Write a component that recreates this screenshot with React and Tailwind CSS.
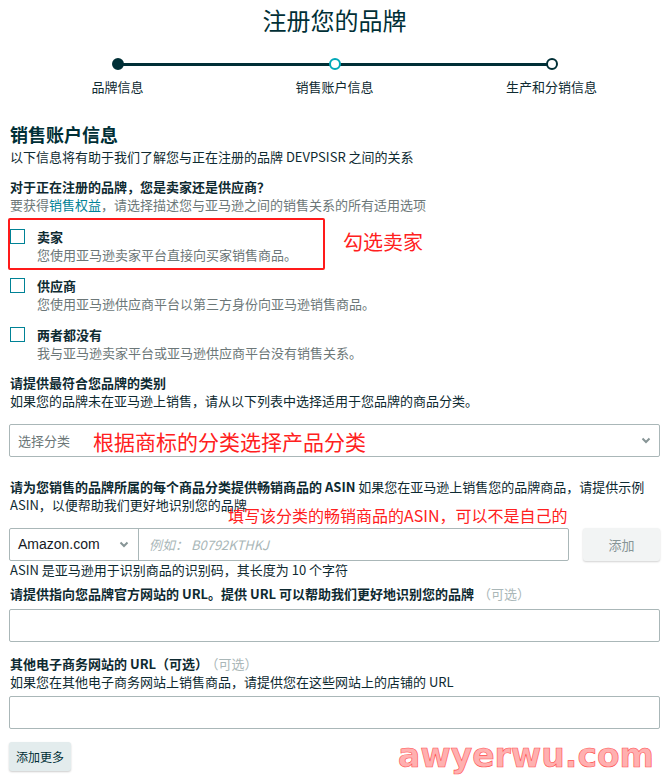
import { useState } from 'react';

const FONT = 'font-["Noto_Sans_CJK_SC","Liberation_Sans",sans-serif]';

function Chevron({ className = '' }) {
  return (
    <svg width="10" height="7" viewBox="0 0 10 7" className={className}>
      <polyline points="1.5,1.5 5,5 8.5,1.5" fill="none" stroke="#879596" strokeWidth="2" />
    </svg>
  );
}

function Stepper() {
  const steps = [
    { label: '品牌信息', dot: 'bg-[#002f36] border-[#002f36]' },
    { label: '销售账户信息', dot: 'bg-white border-[#00a8b8]' },
    { label: '生产和分销信息', dot: 'bg-white border-[#002f36]' },
  ];
  return (
    <div className="relative mt-[24px] grid grid-cols-3">
      {/* connector */}
      <div className="absolute left-[108px] right-[108px] top-[5px] h-[3px] bg-[#002f36]" />
      {steps.map(s => (
        <div key={s.label} className="flex flex-col items-center">
          <div className={`relative w-[12px] h-[12px] rounded-full border-2 ${s.dot}`} />
          <div className="mt-[8px] text-[13px] leading-[18px] text-[#0e2a31]">{s.label}</div>
        </div>
      ))}
    </div>
  );
}

function Option({ title, desc, checked, onToggle, children }) {
  return (
    <div className="relative flex items-start">
      <button onClick={onToggle}
        className={`mt-[1px] ml-[1px] w-[15px] h-[15px] border border-[#008296] shrink-0 ${checked ? 'bg-[#008296]' : 'bg-white'}`} />
      <div className="ml-[12px]">
        <div className="text-[13px] leading-[18px] font-bold text-[#0e2a31]">{title}</div>
        <div className="text-[13px] leading-[18px] text-[#6c7778]">{desc}</div>
      </div>
      {children}
    </div>
  );
}

export default function App() {
  const [checks, setChecks] = useState([false, false, false]);
  const toggle = i => setChecks(c => c.map((v, j) => (j === i ? !v : v)));

  return (
    <div className={`${FONT} w-[669px] bg-white px-[9px] pb-[7px] text-[#0e2a31]`}>
      {/* Title */}
      <h1 className="pt-[6px] text-center text-[24px] leading-[28px] text-[#002f36]">注册您的品牌</h1>

      <Stepper />

      {/* Section */}
      <div className="pl-[1px]">
        <h2 className="mt-[26px] text-[18px] leading-[24px] font-bold text-[#002f36]">销售账户信息</h2>
        <p className="mt-[2px] text-[13px] leading-[18px]">以下信息将有助于我们了解您与正在注册的品牌 DEVPSISR 之间的关系</p>

        <p className="mt-[12px] text-[13px] leading-[18px] font-bold">对于正在注册的品牌，您是卖家还是供应商？</p>
        <p className="text-[13px] leading-[18px] text-[#6c7778]">
          要获得<span className="text-[#008296]">销售权益</span>，请选择描述您与亚马逊之间的销售关系的所有适用选项
        </p>
      </div>

      {/* Options */}
      <div className="mt-[14px] flex flex-col gap-[13px]">
        <Option title="卖家" desc="您使用亚马逊卖家平台直接向买家销售商品。" checked={checks[0]} onToggle={() => toggle(0)}>
          <div className="absolute -left-[1px] -top-[10px] w-[317px] h-[52px] border-2 border-[#ff1a1a] rounded-[2px] pointer-events-none" />
          <div className="absolute left-[334px] top-[2px] text-[20px] leading-[24px] text-[#ff2020]">勾选卖家</div>
        </Option>
        <Option title="供应商" desc="您使用亚马逊供应商平台以第三方身份向亚马逊销售商品。" checked={checks[1]} onToggle={() => toggle(1)} />
        <Option title="两者都没有" desc="我与亚马逊卖家平台或亚马逊供应商平台没有销售关系。" checked={checks[2]} onToggle={() => toggle(2)} />
      </div>

      {/* Category */}
      <div className="pl-[1px] mt-[12px]">
        <p className="text-[13px] leading-[18px] font-bold">请提供最符合您品牌的类别</p>
        <p className="text-[13px] leading-[18px]">如果您的品牌未在亚马逊上销售，请从以下列表中选择适用于您品牌的商品分类。</p>
      </div>
      <div className="mt-[14px] h-[33px] border border-[#aab7b8] rounded-[2px] flex items-center pl-[8px] pr-[8px]">
        <span className="text-[13px] text-[#6c7778]">选择分类</span>
        <span className="ml-[23px] text-[21px] leading-[26px] text-[#ff2020]">根据商标的分类选择产品分类</span>
        <Chevron className="ml-auto" />
      </div>

      {/* ASIN */}
      <div className="relative pl-[1px] mt-[21px] text-[13px] leading-[18px]">
        <span className="font-bold">请为您销售的品牌所属的每个商品分类提供畅销商品的 ASIN</span>
        {' '}如果您在亚马逊上销售您的品牌商品，请提供示例<br />ASIN，以便帮助我们更好地识别您的品牌
        <div className="absolute left-[219px] top-[27px] text-[16px] leading-[20px] text-[#ff2020] whitespace-nowrap">填写该分类的畅销商品的ASIN，可以不是自己的</div>
      </div>
      <div className="mt-[14px] flex items-stretch">
        <div className="flex-1 h-[33px] flex border border-[#aab7b8] rounded-[2px]">
          <div className="w-[129px] flex items-center pl-[8px] pr-[9px] border-r border-[#aab7b8]">
            <span className="text-[14px] text-[#16191f] font-['Liberation_Sans',sans-serif]">Amazon.com</span>
            <Chevron className="ml-auto" />
          </div>
          <div className="flex-1 flex items-center pl-[10px] text-[13px] italic text-[#aab7b8]">例如： B0792KTHKJ</div>
        </div>
        <button className="ml-[14px] w-[77px] h-[33px] rounded-[3px] bg-[#f2f4f4] shadow-[0_1px_2px_rgba(0,0,0,0.18)] text-[13px] text-[#879596]">添加</button>
      </div>
      <p className="pl-[1px] text-[13px] leading-[18px]">ASIN 是亚马逊用于识别商品的识别码，其长度为 10 个字符</p>

      {/* Website URL */}
      <p className="pl-[1px] mt-[6px] text-[13px] leading-[18px]">
        <span className="font-bold">请提供指向您品牌官方网站的 URL。提供 URL 可以帮助我们更好地识别您的品牌</span>
        <span className="ml-[4px] text-[#aab7b8]">（可选）</span>
      </p>
      <input className="mt-[6px] block w-full h-[33px] border border-[#aab7b8] rounded-[2px] outline-none px-[8px] text-[13px]" />

      {/* Other e-commerce */}
      <p className="pl-[1px] mt-[13px] text-[13px] leading-[18px]">
        <span className="font-bold">其他电子商务网站的 URL（可选）</span>
        <span className="ml-[4px] text-[#aab7b8]">（可选）</span>
      </p>
      <p className="pl-[1px] text-[13px] leading-[18px]">如果您在其他电子商务网站上销售商品，请提供您在这些网站上的店铺的 URL</p>
      <input className="mt-[5px] block w-full h-[33px] border border-[#aab7b8] rounded-[2px] outline-none px-[8px] text-[13px]" />

      <div className="mt-[13px] flex items-start">
        <button className="w-[62px] h-[29px] rounded-[3px] bg-[#e3eced] shadow-[0_1px_2px_rgba(0,0,0,0.2)] text-[12px] text-[#002f36]">添加更多</button>
        <div className="ml-auto mr-[6px] -mt-[4px] text-[33px] leading-[36px] font-bold text-[#ffb0b0] [-webkit-text-stroke:0.6px_#ff5050] font-['DejaVu_Sans',sans-serif]">awyerwu.com</div>
      </div>
    </div>
  );
}
